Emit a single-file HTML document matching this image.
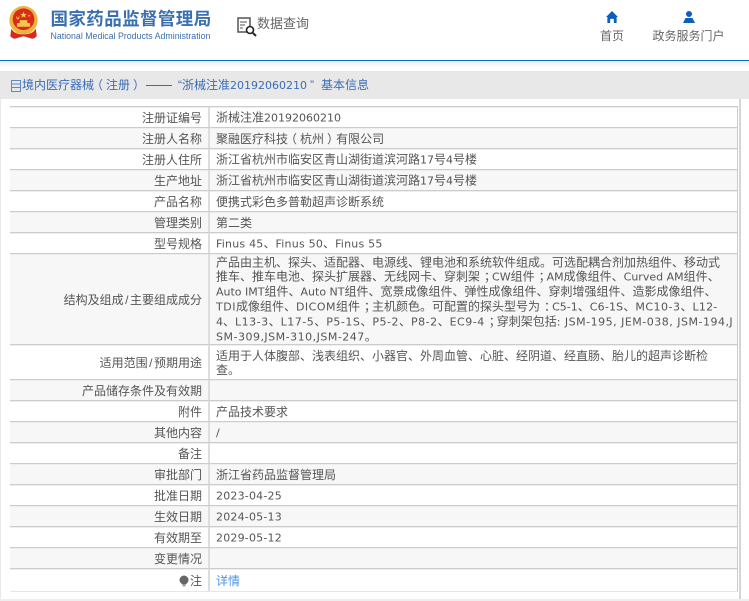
<!DOCTYPE html>
<html lang="zh"><head><meta charset="utf-8"><style>
html,body{margin:0;padding:0;width:749px;height:601px;overflow:hidden;background:#fff}
body{position:relative;font-family:"Liberation Sans","Noto Sans CJK SC",sans-serif;font-size:12px;color:#555}
.a{position:absolute;white-space:nowrap}
.r{position:absolute;left:10px;width:728px;box-sizing:border-box;border-top:1px solid #ccc;border-right:1px solid #ccc;box-shadow:inset 0 1px 0 #eee}
.r.g{background:#f7f7f7}
.l{position:absolute;left:0;width:192px;text-align:right;top:50%;margin-top:.5px;transform:translateY(-50%);white-space:nowrap;line-height:14px}
.v{position:absolute;left:206px;white-space:pre;line-height:14px;top:50%;margin-top:1px;transform:translateY(-50%)}
.d{position:absolute;left:198px;top:0;bottom:0;width:2px;background:#ddd}
i{font-style:normal;font-family:"DejaVu Sans",sans-serif;font-size:11px}
i.w{letter-spacing:.5px}
i.n{letter-spacing:.22px}
i.h{letter-spacing:.2px}
u{text-decoration:none;padding-left:1.500px;letter-spacing:1.500px}
b{font-weight:400;position:relative}
b.o{left:-3px}b.c{left:3px}b.s{left:4px}
</style></head><body>
<svg class="a" style="left:8px;top:6px" width="32" height="34" viewBox="0 0 33 36"><circle cx="16" cy="15" r="15" fill="#e8b83c"/><circle cx="16" cy="14" r="11.500" fill="#dd2a1c"/><path d="M8 10l2 3 2-3-1 4h-2zM16 6l1 2.500h2.500l-2 1.500.8 2.500-2.300-1.500-2.300 1.500.8-2.500-2-1.500H15zM21 9l1 1 1-1v2h-2z" fill="#f5d24a"/><rect x="9" y="18" width="14" height="4" fill="#f2c84b"/><rect x="12" y="15" width="8" height="3" fill="#f2c84b"/><path d="M3 24c3 5 7 6 13 6s10-1 13-6l1 8c-3 3-5 3-7 2l-7-2-7 2c-2 1-4 1-7-2z" fill="#d8291c"/><path d="M8 27h16v2H8z" fill="#e8b83c"/></svg>
<div class="a" style="left:50.500px;top:8px;font-size:17.500px;font-weight:700;color:#3a6fb0;letter-spacing:.4px;line-height:22px">国家药品监督管理局</div>
<div class="a" style="left:50.500px;top:30px;font-size:8.800px;color:#3a6fb0;line-height:12px">National Medical Products Administration</div>
<svg class="a" style="left:236px;top:16px" width="22" height="22" viewBox="0 0 22 22" fill="none" stroke="#555"><path d="M11 16H2V2h12v8" stroke-width="1.500"/><path d="M4 6h7M4 9h5M4 12h3" stroke-width="1"/><circle cx="14" cy="14" r="3.500" stroke="#222" stroke-width="1.600"/><path d="M17 17l3 3" stroke="#222" stroke-width="2"/></svg>
<div class="a" style="left:257px;top:15px;font-size:13px;line-height:18px;color:#666">数据查询</div>
<svg class="a" style="left:606px;top:11px" width="12" height="12" viewBox="0 0 13 13"><path d="M6.500 0L13 6.500h-1.500V13h-3V8.500h-4V13h-3V6.500H0z" fill="#0d5fbe"/></svg>
<div class="a" style="left:600px;top:29px;font-size:12px;line-height:15px;color:#666">首页</div>
<svg class="a" style="left:683px;top:11px" width="12" height="12" viewBox="0 0 12 12"><circle cx="6" cy="3" r="3" fill="#0d5fbe"/><path d="M2.500 7h7L12 12H0z" fill="#0d5fbe"/></svg>
<div class="a" style="left:652.500px;top:29px;font-size:12px;line-height:15px;color:#666">政务服务门户</div>
<div class="a" style="left:0;top:60px;width:749px;height:1px;background:#0d6cc4"></div>
<div class="a" style="left:0;top:61px;width:749px;height:10px;background:linear-gradient(#eee,#fff 70%)"></div>
<div class="a" style="left:0;top:71px;width:749px;height:28px;background:#e8e8e8"></div>
<svg class="a" style="left:11px;top:79px" width="10" height="13" viewBox="0 0 10 13" fill="none" stroke="#5f88c8"><path d="M.5 1.500h9v11h-9zM.5 5h9M.5 8.500h9"/></svg>
<div class="a" style="left:22px;top:78px;line-height:15px;color:#3b6cb8">境内医疗器械<b class="o">（</b>注册<b class="c">）</b></div>
<div class="a" style="left:146px;top:85px;width:26px;height:1px;background:#3b6cb8"></div>
<div class="a" style="left:178px;top:78px;line-height:15px;color:#3b6cb8">“浙械注准<i>20192060210</i></div>
<div class="a" style="left:310px;top:78px;line-height:15px;color:#3b6cb8">”</div>
<div class="a" style="left:321px;top:78px;line-height:15px;color:#3b6cb8">基本信息</div>
<div class="a" style="left:0;top:99px;width:1px;height:500px;background:#e8e8e8"></div>
<div class="a" style="left:739px;top:99px;width:2px;height:500px;background:#d6d6d6"></div>
<div class="a" style="left:0;top:599px;width:749px;height:2px;background:#eee"></div>

<div class="r" style="top:106px;height:21px"><div class="l">注册证编号</div><div class="d"></div><div class="v">浙械注准<i>20192060210</i></div></div>
<div class="r g" style="top:127px;height:21px"><div class="l">注册人名称</div><div class="d"></div><div class="v">聚融医疗科技<b class="o">（</b>杭州<b class="c">）</b>有限公司</div></div>
<div class="r" style="top:148px;height:21px"><div class="l">注册人住所</div><div class="d"></div><div class="v">浙江省杭州市临安区青山湖街道滨河路<i>17</i>号<i>4</i>号楼</div></div>
<div class="r g" style="top:169px;height:21px"><div class="l">生产地址</div><div class="d"></div><div class="v">浙江省杭州市临安区青山湖街道滨河路<i>17</i>号<i>4</i>号楼</div></div>
<div class="r" style="top:190px;height:21px"><div class="l">产品名称</div><div class="d"></div><div class="v">便携式彩色多普勒超声诊断系统</div></div>
<div class="r g" style="top:211px;height:21px"><div class="l">管理类别</div><div class="d"></div><div class="v">第二类</div></div>
<div class="r" style="top:232px;height:21px"><div class="l">型号规格</div><div class="d"></div><div class="v"><i class="n">Finus 45</i>、<i class="n">Finus 50</i>、<i class="n">Finus 55</i></div></div>
<div class="r g" style="top:253px;height:91px"><div class="l">结构及组成<u>/</u>主要组成成分</div><div class="d"></div><div class="v">产品由主机、探头、适配器、电源线、锂电池和系统软件组成。可选配耦合剂加热组件、移动式
推车、推车电池、探头扩展器、无线网卡、穿刺架<b class="s">；</b><i>CW</i>组件<b class="s">；</b><i>AM</i>成像组件、<i>Curved AM</i>组件、
<i>Auto IMT</i>组件、<i>Auto NT</i>组件、宽景成像组件、弹性成像组件、穿刺增强组件、造影成像组件、
<i class="w">TDI</i>成像组件、<i class="w">DICOM</i>组件<b class="s">；</b>主机颜色。可配置的探头型号为<b class="s">：</b><i>C5-1</i>、<i class="h">C6-1S</i>、<i class="w">MC10-3</i>、<i class="h">L12-</i>
<i>4</i>、<i class="w">L13-3</i>、<i class="w">L17-5</i>、<i class="w">P5-1S</i>、<i class="w">P5-2</i>、<i class="w">P8-2</i>、<i class="w">EC9-4</i><b class="s">；</b>穿刺架包括<i class="w">: JSM-195, JEM-038, JSM-194,J</i>
<i class="w">SM-309,JSM-310,JSM-247</i>。</div></div>
<div class="r" style="top:344px;height:35px"><div class="l">适用范围<u>/</u>预期用途</div><div class="d"></div><div class="v">适用于人体腹部、浅表组织、小器官、外周血管、心脏、经阴道、经直肠、胎儿的超声诊断检
查。</div></div>
<div class="r g" style="top:379px;height:21px"><div class="l">产品储存条件及有效期</div><div class="d"></div></div>
<div class="r" style="top:400px;height:21px"><div class="l">附件</div><div class="d"></div><div class="v">产品技术要求</div></div>
<div class="r g" style="top:421px;height:21px"><div class="l">其他内容</div><div class="d"></div><div class="v"><i>/</i></div></div>
<div class="r" style="top:442px;height:21px"><div class="l">备注</div><div class="d"></div></div>
<div class="r g" style="top:463px;height:21px"><div class="l">审批部门</div><div class="d"></div><div class="v">浙江省药品监督管理局</div></div>
<div class="r" style="top:484px;height:21px"><div class="l">批准日期</div><div class="d"></div><div class="v"><i class="h">2023-04-25</i></div></div>
<div class="r g" style="top:505px;height:21px"><div class="l">生效日期</div><div class="d"></div><div class="v"><i class="h">2024-05-13</i></div></div>
<div class="r" style="top:526px;height:21px"><div class="l">有效期至</div><div class="d"></div><div class="v"><i class="h">2029-05-12</i></div></div>
<div class="r g" style="top:547px;height:21px"><div class="l">变更情况</div><div class="d"></div></div>
<div class="r" style="top:568px;height:24px;border-bottom:1px solid #e6e6e6"><div class="l">注</div><div class="d"></div><div class="v" style="color:#4b94e8">详情</div></div>
<svg class="a" style="left:179px;top:575px" width="11" height="12" viewBox="0 0 11 12"><circle cx="5" cy="5" r="4.500" fill="#666"/><path d="M3 9h4l-1 2.500H4z" fill="#999"/></svg>
</body></html>
